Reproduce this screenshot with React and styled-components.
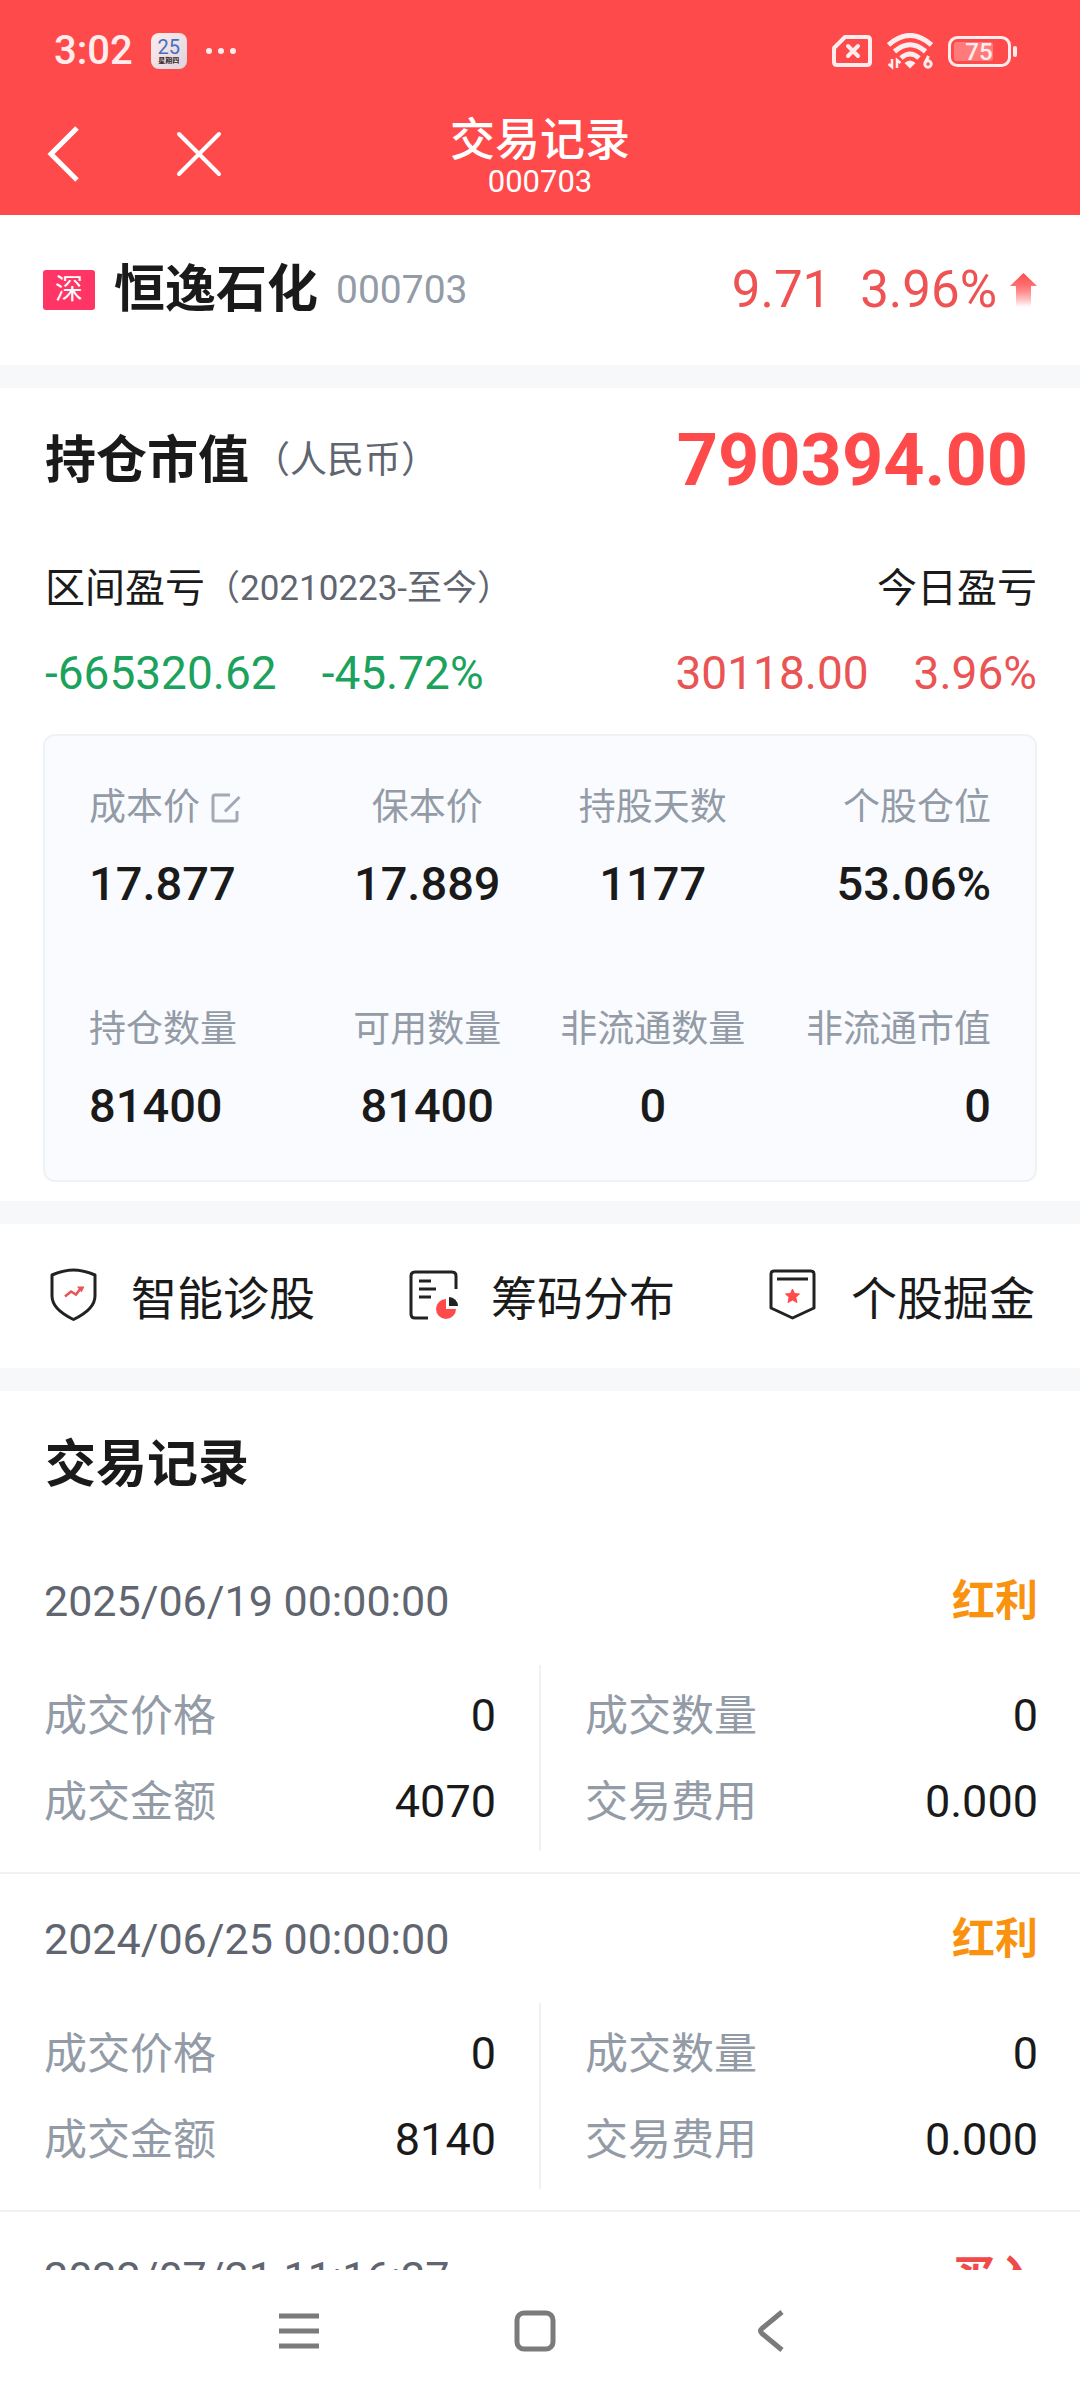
import React from 'react';
import styled, { createGlobalStyle } from 'styled-components';

const GlobalStyle = createGlobalStyle`
  * {
    box-sizing: border-box;
  }
  body {
    margin: 0;
    background: #ffffff;
    color: #1a1a1a;
    font-family: Roboto, "Noto Sans CJK SC", sans-serif;
  }
  h1, h2, p, dl, dd, dt, ul {
    margin: 0;
    padding: 0;
    font-weight: 400;
  }
  button {
    padding: 0;
    border: none;
    background: none;
    color: inherit;
    font: inherit;
    cursor: pointer;
  }
  svg {
    display: block;
    flex: none;
  }
`;

const Page = styled.div`
  display: flex;
  flex-direction: column;
  height: 100vh;
`;

const Header = styled.header`
  flex: none;
  background: #ff4a4b;
  color: #ffffff;
`;

const StatusBar = styled.div`
  display: flex;
  align-items: center;
  justify-content: space-between;
  height: 102px;
  padding: 0 62px 0 54px;
`;

const StatusGroup = styled.div`
  display: flex;
  align-items: center;
  gap: ${({ $gap }) => $gap}px;
  opacity: 0.9;
`;

const Time = styled.span`
  font-size: 40px;
  font-weight: 500;
  line-height: 48px;
`;

const CalendarIcon = styled.span`
  display: flex;
  flex-direction: column;
  align-items: center;
  justify-content: center;
  width: 36px;
  height: 36px;
  border-radius: 8px;
  background: linear-gradient(135deg, #ffffff, #d9e2ec);
`;

const CalendarDay = styled.span`
  color: #2f74d0;
  font-size: 20px;
  line-height: 20px;
`;

const CalendarWeek = styled.span`
  color: #1a1a1a;
  font-size: 7px;
  font-weight: 700;
  line-height: 9px;
`;

const TitleBar = styled.div`
  display: grid;
  grid-template-columns: 1fr auto 1fr;
  align-items: center;
  height: 113px;
  padding: 0 40px;
`;

const TitleButtons = styled.div`
  display: flex;
  gap: 87px;
  padding-bottom: 10px;
`;

const IconButton = styled.button`
  display: flex;
  align-items: center;
  justify-content: center;
  width: 48px;
  height: 60px;
`;

const PageTitle = styled.h1`
  font-size: 45px;
  font-weight: 500;
  line-height: 46px;
  text-align: center;
`;

const PageSubtitle = styled.p`
  font-size: 31px;
  line-height: 36px;
  text-align: center;
`;

const Content = styled.main`
  flex: 1;
  min-height: 0;
  overflow-y: auto;
  scrollbar-width: none;
`;

const Band = styled.div`
  height: 23px;
  background: #f6f8fa;
`;

const StockRow = styled.section`
  display: flex;
  align-items: center;
  justify-content: space-between;
  height: 150px;
  padding: 0 43px;
`;

const StockInfo = styled.div`
  display: flex;
  align-items: center;
`;

const Market = styled.span`
  width: 52px;
  margin-right: 19px;
  border-radius: 3px;
  background: #ff3566;
  color: #ffffff;
  font-size: 28px;
  line-height: 40px;
  text-align: center;
`;

const Heading = styled.h2`
  font-size: 51px;
  font-weight: 700;
  line-height: 60px;
`;

const StockCode = styled.span`
  margin-left: 18px;
  color: #939ba7;
  font-size: 39px;
  line-height: 48px;
`;

const Quote = styled.div`
  display: flex;
  align-items: center;
  gap: 29px;
  color: #ee5253;
  font-size: 51px;
  line-height: 60px;
`;

const QuoteChange = styled.span`
  display: flex;
  align-items: center;
  gap: 13px;
`;

const Holding = styled.section`
  padding: 43px 43px 19px;
`;

const SplitRow = styled.div`
  display: flex;
  align-items: center;
  justify-content: space-between;
`;

const HoldingRow = styled(SplitRow)`
  padding-left: 2px;
`;

const HoldingTitle = styled.div`
  display: flex;
  align-items: center;
`;

const Unit = styled.span`
  margin-left: ${({ $small }) => ($small ? 0 : 4)}px;
  color: #606570;
  font-size: ${({ $small }) => ($small ? 35 : 37)}px;
  line-height: 60px;
`;

const MarketValue = styled.strong`
  margin-right: 9px;
  color: #ff4a4b;
  font-size: 72px;
  font-weight: 700;
  line-height: 60px;
`;

const ProfitLabels = styled(HoldingRow)`
  margin-top: 68px;
  font-size: 40px;
  line-height: 60px;
`;

const ProfitValues = styled(HoldingRow)`
  margin-top: 24px;
  font-size: 46px;
  line-height: 60px;
`;

const Amounts = styled.div`
  display: flex;
  gap: 45px;
  color: ${({ $down }) => ($down ? '#1ba25c' : '#e95455')};
`;

const Card = styled.dl`
  display: grid;
  grid-template-columns: repeat(4, 1fr);
  row-gap: 88px;
  margin-top: 31px;
  padding: 44px;
  border: 2px solid #eff2f5;
  border-radius: 12px;
  background: #fafbff;
`;

const Stat = styled.div`
  display: flex;
  flex-direction: column;
  align-items: center;
  gap: 18px;
  white-space: nowrap;

  &:nth-child(4n + 1) {
    align-items: flex-start;
  }
  &:nth-child(4n) {
    align-items: flex-end;
  }
`;

const StatLabel = styled.dt`
  display: flex;
  align-items: center;
  gap: 11px;
  color: #939ba7;
  font-size: 37px;
  line-height: 56px;
`;

const StatValue = styled.dd`
  font-size: 47px;
  font-weight: 500;
  line-height: 60px;
`;

const Actions = styled.nav`
  display: grid;
  grid-template-columns: repeat(3, 1fr);
`;

const ActionButton = styled.button`
  display: flex;
  align-items: center;
  gap: 28px;
  height: 144px;
  padding: 0 0 3px 43px;
  font-size: 46px;
  white-space: nowrap;
`;

const Records = styled.section`
  padding-top: 44px;
`;

const RecordsTitle = styled(Heading)`
  margin: 0 45px 41px;
`;

const Record = styled.article`
  height: 338px;
  padding: 35px 42px 0 44px;
  border-bottom: 2px solid #eff2f5;
`;

const RecordDate = styled.time`
  color: #606570;
  font-size: 43px;
  line-height: 60px;
`;

const RecordType = styled.span`
  color: ${({ $buy }) => ($buy ? '#f04a4b' : '#f9920f')};
  font-size: 43px;
  font-weight: 700;
  line-height: 60px;
`;

const RecordGrid = styled.div`
  display: grid;
  grid-template-columns: 1fr 1fr;
  height: 186px;
  margin-top: 34px;
`;

const RecordColumn = styled.dl`
  padding-top: 8px;

  &:first-child {
    padding-right: 43px;
    border-right: 2px solid #eff2f5;
  }
  &:last-child {
    padding-left: 44px;
  }
`;

const Field = styled.div`
  display: flex;
  justify-content: space-between;
  line-height: 86px;
`;

const FieldLabel = styled.dt`
  color: #939ba7;
  font-size: 43px;
`;

const FieldValue = styled.dd`
  font-size: 45px;
`;

const SystemNav = styled.nav`
  flex: none;
  display: grid;
  grid-template-columns: repeat(3, 236px);
  justify-content: center;
  height: 130px;
  padding: 0 10px 8px 0;
`;

const SystemButton = styled.button`
  display: flex;
  align-items: center;
  justify-content: center;
  color: #7b7b7b;
`;

const DotsIcon = () => (
  <svg width="32" height="8" viewBox="0 0 32 8" fill="#fff">
    <circle cx="4" cy="4" r="3" />
    <circle cx="16" cy="4" r="3" />
    <circle cx="28" cy="4" r="3" />
  </svg>
);

const SimIcon = () => (
  <svg width="40" height="32" viewBox="0 0 40 32" fill="none" stroke="#fff">
    <path d="M13 2H35Q38 2 38 5V27Q38 30 35 30H5Q2 30 2 27V13Z" strokeWidth="4" strokeLinejoin="round" />
    <path d="M16 11L26 21M26 11L16 21" strokeWidth="4" strokeLinecap="round" />
  </svg>
);

const WifiIcon = () => (
  <svg width="46" height="37" viewBox="0 0 46 37" fill="none" stroke="#fff" strokeWidth="5">
    <path d="M1.500 12Q23 -7 44.500 12" />
    <path d="M7.500 18.500Q23 5 38.500 18.500" />
    <path d="M14 25Q23 17 32 25" />
    <path d="M17.500 30Q23 25 28.500 30L23 35.500Z" fill="#fff" stroke="none" />
    <path d="M5 26V34L1.500 31M10 35V27L13.500 30" strokeWidth="2.500" />
    <circle cx="41" cy="31" r="3.200" strokeWidth="3" />
    <path d="M41.500 23L38 30" strokeWidth="3" />
  </svg>
);

const BatteryIcon = () => (
  <svg width="70" height="31" viewBox="0 0 70 31">
    <rect x="1.500" y="1.500" width="60" height="28" rx="8" fill="none" stroke="#fff" strokeWidth="3" />
    <rect x="6" y="6" width="39" height="19" rx="3" fill="#fff" opacity="0.3" />
    <rect x="65" y="10" width="4" height="11" rx="2" fill="#fff" />
    <text x="31" y="24" fill="#fff" fontSize="24" fontWeight="500" textAnchor="middle">75</text>
  </svg>
);

const BackIcon = () => (
  <svg width="34" height="58" viewBox="0 0 34 58" fill="none" stroke="#fff" strokeWidth="5">
    <path d="M30 3L4 29L30 55" />
  </svg>
);

const CloseIcon = () => (
  <svg width="46" height="46" viewBox="0 0 46 46" fill="none" stroke="#fff" strokeWidth="4" strokeLinecap="round">
    <path d="M3 3L43 43M43 3L3 43" />
  </svg>
);

const UpArrow = () => (
  <svg width="27" height="34" viewBox="0 0 27 34">
    <defs>
      <linearGradient id="rise" x1="0" y1="0" x2="0" y2="1">
        <stop offset="0" stopColor="#ff4a4b" />
        <stop offset="0.4" stopColor="#ff7475" />
        <stop offset="1" stopColor="#ff4a4b" stopOpacity="0" />
      </linearGradient>
    </defs>
    <path d="M13.500 0L27 13H21V34H6V13H0Z" fill="url(#rise)" />
  </svg>
);

const EditIcon = () => (
  <svg width="30" height="30" viewBox="0 0 30 30" fill="none" stroke="#a3aab5" strokeWidth="3">
    <path d="M19 2H4Q2 2 2 4V26Q2 28 4 28H24Q26 28 26 26V18" />
    <path d="M28.500 4L14 18.500" />
  </svg>
);

const ShieldIcon = () => (
  <svg width="60" height="60" viewBox="0 0 60 60" fill="none">
    <path
      d="M30.500 5C37 5 45 7 52 10V31C52 42 42 49 30.500 54.500C19 49 9 42 9 31V10C16 7 24 5 30.500 5Z"
      stroke="#222"
      strokeWidth="3"
      strokeLinejoin="round"
    />
    <path d="M22 31.500L28 26.500L33 29.500L38 23" stroke="#e95455" strokeWidth="2.500" />
    <path d="M34 21.500L41.500 21.500L38.500 27.500Z" fill="#e95455" />
  </svg>
);

const ChipIcon = () => (
  <svg width="60" height="60" viewBox="0 0 60 60" fill="none">
    <path d="M53 24V11Q53 7 49 7H12Q8 7 8 11V49Q8 53 12 53H25" stroke="#222" strokeWidth="3" />
    <path d="M16 16H28M16 24H33M16 32H28" stroke="#222" strokeWidth="3" />
    <path d="M43 34V44H53A10 10 0 1 1 43 34Z" fill="#ff4a4b" />
    <path d="M46 32A9 9 0 0 1 55 41H46Z" fill="#222" />
  </svg>
);

const MedalIcon = () => (
  <svg width="60" height="60" viewBox="0 0 60 60" fill="none">
    <path
      d="M11 6H48Q51 6 51 9V43L29.500 53L8 43V9Q8 6 11 6Z"
      stroke="#222"
      strokeWidth="3"
      strokeLinejoin="round"
    />
    <path d="M14 14H45" stroke="#222" strokeWidth="3" />
    <path
      d="M29.500 24L31.500 28.500L36.500 29L32.800 32.300L34 37.500L29.500 35L25 37.500L26.200 32.300L22.500 29L27.500 28.500Z"
      fill="#ff4a4b"
      stroke="#ff4a4b"
      strokeLinejoin="round"
    />
  </svg>
);

const MenuIcon = () => (
  <svg width="40" height="40" viewBox="0 0 40 40" fill="none" stroke="currentColor" strokeWidth="5">
    <path d="M0 5H40M0 20H40M0 35H40" />
  </svg>
);

const HomeIcon = () => (
  <svg width="42" height="42" viewBox="0 0 42 42" fill="none" stroke="currentColor" strokeWidth="5">
    <rect x="3" y="3" width="36" height="36" rx="7" />
  </svg>
);

const ReturnIcon = () => (
  <svg width="28" height="42" viewBox="0 0 28 42" fill="none" stroke="currentColor" strokeWidth="5">
    <path d="M25 2L5 18.500Q2 21 5 23.500L25 40" />
  </svg>
);

const stats = [
  { label: '成本价', value: '17.877', editable: true },
  { label: '保本价', value: '17.889' },
  { label: '持股天数', value: '1177' },
  { label: '个股仓位', value: '53.06%' },
  { label: '持仓数量', value: '81400' },
  { label: '可用数量', value: '81400' },
  { label: '非流通数量', value: '0' },
  { label: '非流通市值', value: '0' },
];

const actions = [
  { label: '智能诊股', icon: ShieldIcon },
  { label: '筹码分布', icon: ChipIcon },
  { label: '个股掘金', icon: MedalIcon },
];

const records = [
  { date: '2025/06/19 00:00:00', type: '红利', price: '0', count: '0', amount: '4070', fee: '0.000' },
  { date: '2024/06/25 00:00:00', type: '红利', price: '0', count: '0', amount: '8140', fee: '0.000' },
  { date: '2022/07/21 11:16:27', type: '买入', buy: true },
];

const RecordItem = ({ record }) => (
  <Record>
    <SplitRow>
      <RecordDate>{record.date}</RecordDate>
      <RecordType $buy={record.buy}>{record.type}</RecordType>
    </SplitRow>
    {record.amount && (
      <RecordGrid>
        <RecordColumn>
          <Field>
            <FieldLabel>成交价格</FieldLabel>
            <FieldValue>{record.price}</FieldValue>
          </Field>
          <Field>
            <FieldLabel>成交金额</FieldLabel>
            <FieldValue>{record.amount}</FieldValue>
          </Field>
        </RecordColumn>
        <RecordColumn>
          <Field>
            <FieldLabel>成交数量</FieldLabel>
            <FieldValue>{record.count}</FieldValue>
          </Field>
          <Field>
            <FieldLabel>交易费用</FieldLabel>
            <FieldValue>{record.fee}</FieldValue>
          </Field>
        </RecordColumn>
      </RecordGrid>
    )}
  </Record>
);

const App = () => {
  return (
    <Page>
      <GlobalStyle />
      <Header>
        <StatusBar>
          <StatusGroup $gap={18}>
            <Time>3:02</Time>
            <CalendarIcon>
              <CalendarDay>25</CalendarDay>
              <CalendarWeek>星期四</CalendarWeek>
            </CalendarIcon>
            <DotsIcon />
          </StatusGroup>
          <StatusGroup $gap={15}>
            <SimIcon />
            <WifiIcon />
            <BatteryIcon />
          </StatusGroup>
        </StatusBar>
        <TitleBar>
          <TitleButtons>
            <IconButton aria-label="返回">
              <BackIcon />
            </IconButton>
            <IconButton aria-label="关闭">
              <CloseIcon />
            </IconButton>
          </TitleButtons>
          <div>
            <PageTitle>交易记录</PageTitle>
            <PageSubtitle>000703</PageSubtitle>
          </div>
        </TitleBar>
      </Header>

      <Content>
        <StockRow>
          <StockInfo>
            <Market>深</Market>
            <Heading>恒逸石化</Heading>
            <StockCode>000703</StockCode>
          </StockInfo>
          <Quote>
            <span>9.71</span>
            <QuoteChange>
              3.96%
              <UpArrow />
            </QuoteChange>
          </Quote>
        </StockRow>
        <Band />

        <Holding>
          <HoldingRow>
            <HoldingTitle>
              <Heading>持仓市值</Heading>
              <Unit>（人民币）</Unit>
            </HoldingTitle>
            <MarketValue>790394.00</MarketValue>
          </HoldingRow>
          <ProfitLabels>
            <HoldingTitle>
              区间盈亏<Unit $small>（20210223-至今）</Unit>
            </HoldingTitle>
            <span>今日盈亏</span>
          </ProfitLabels>
          <ProfitValues>
            <Amounts $down>
              <span>-665320.62</span>
              <span>-45.72%</span>
            </Amounts>
            <Amounts>
              <span>30118.00</span>
              <span>3.96%</span>
            </Amounts>
          </ProfitValues>
          <Card>
            {stats.map((stat) => (
              <Stat key={stat.label}>
                <StatLabel>
                  {stat.label}
                  {stat.editable && <EditIcon />}
                </StatLabel>
                <StatValue>{stat.value}</StatValue>
              </Stat>
            ))}
          </Card>
        </Holding>
        <Band />

        <Actions>
          {actions.map(({ label, icon: Icon }) => (
            <ActionButton key={label}>
              <Icon />
              {label}
            </ActionButton>
          ))}
        </Actions>
        <Band />

        <Records>
          <RecordsTitle>交易记录</RecordsTitle>
          {records.map((record) => (
            <RecordItem key={record.date} record={record} />
          ))}
        </Records>
      </Content>

      <SystemNav>
        <SystemButton aria-label="菜单">
          <MenuIcon />
        </SystemButton>
        <SystemButton aria-label="主页">
          <HomeIcon />
        </SystemButton>
        <SystemButton aria-label="返回">
          <ReturnIcon />
        </SystemButton>
      </SystemNav>
    </Page>
  );
};

export default App;
